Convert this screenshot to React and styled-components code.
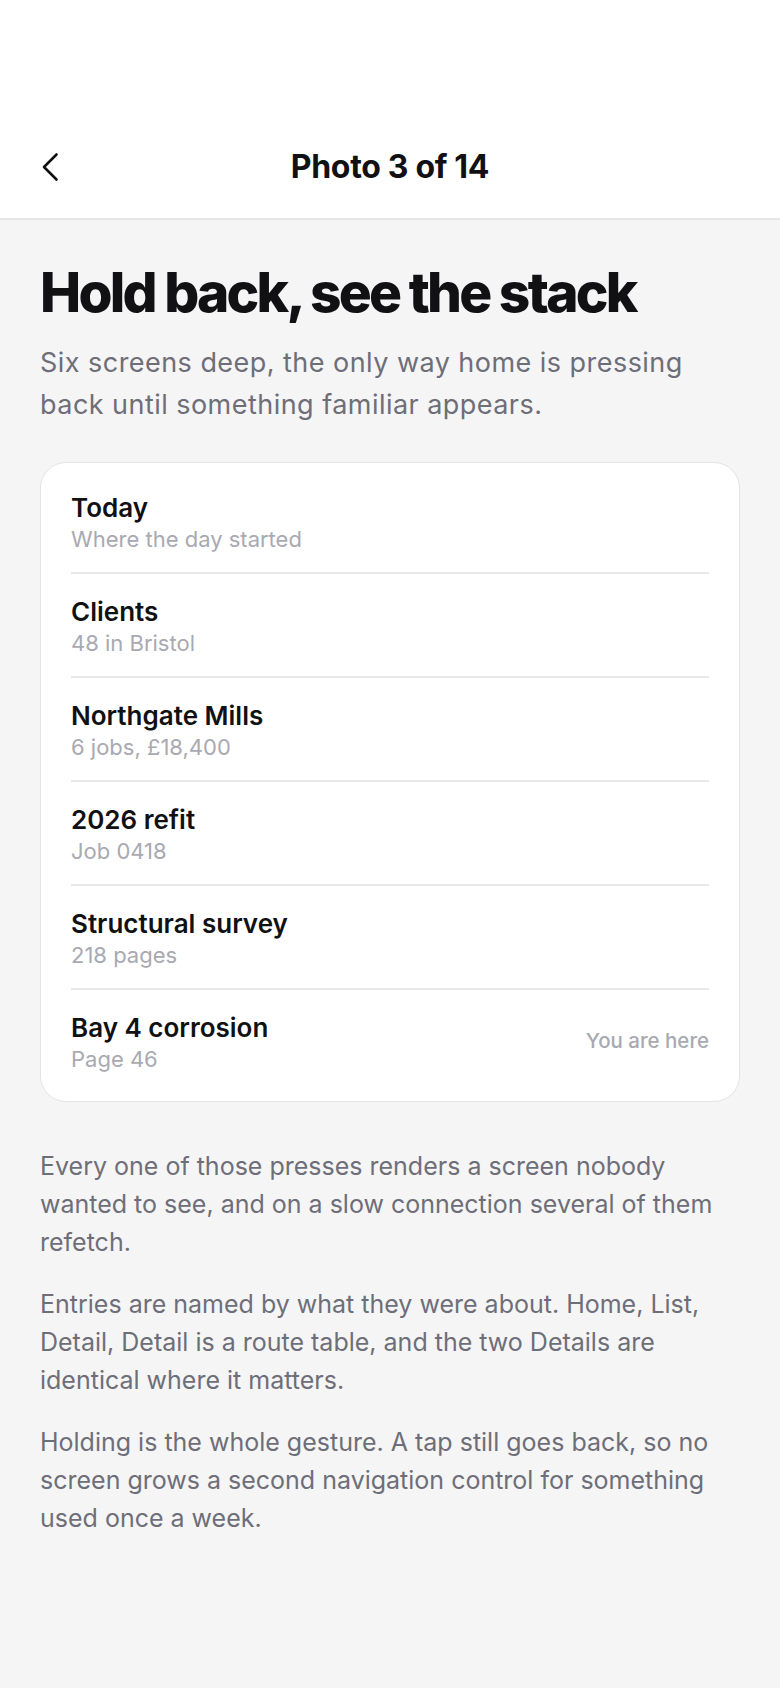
import React from "react";
import styled, { createGlobalStyle } from "styled-components";

const Global = createGlobalStyle`
  html, body { margin: 0; padding: 0; background: #f5f5f6; }
  body { font-family: Inter, "Noto Sans", sans-serif; -webkit-font-smoothing: antialiased; }
  * { box-sizing: border-box; }
`;

const Screen = styled.div`
  min-height: 1688px;
  background: #f5f5f6;
  display: flex;
  flex-direction: column;
`;

const Header = styled.header`
  background: #ffffff;
  border-bottom: 2px solid #e6e6e9;
  height: 220px;
  padding-top: 116px;
  display: grid;
  grid-template-columns: 100px 1fr 100px;
  align-items: start;
`;

const BackButton = styled.button`
  background: none;
  border: none;
  padding: 0 0 0 41px;
  height: 102px;
  display: flex;
  align-items: center;
  color: #111114;
  cursor: pointer;
`;

const Title = styled.h1`
  margin: 0;
  text-align: center;
  font-size: 32px;
  font-weight: 700;
  letter-spacing: -0.01em;
  color: #111114;
  line-height: 102px;
`;

const Content = styled.main`
  padding: 40px 40px 60px;
  display: flex;
  flex-direction: column;
`;

const Heading = styled.h2`
  margin: 0;
  font-size: 55px;
  line-height: 64px;
  font-weight: 800;
  letter-spacing: -0.05em;
  color: #111114;
`;

const Lede = styled.p`
  margin: 18px 0 0;
  font-size: 27px;
  line-height: 42px;
  letter-spacing: 0.017em;
  color: #6e6e78;
  font-weight: 400;
`;

const Card = styled.section`
  margin-top: 36px;
  background: #ffffff;
  border: 1px solid #e4e4e8;
  border-radius: 26px;
  padding: 7px 30px 9px;
  display: flex;
  flex-direction: column;
`;

const Row = styled.div`
  display: flex;
  align-items: center;
  justify-content: space-between;
  padding: 22px 0 18px;
  border-bottom: ${(p) => (p.$last ? "none" : "2px solid #e8e8eb")};
`;

const RowText = styled.div`
  display: flex;
  flex-direction: column;
`;

const RowTitle = styled.div`
  font-size: 26px;
  line-height: 32px;
  font-weight: 600;
  color: #111114;
`;

const RowSub = styled.div`
  font-size: 22px;
  line-height: 30px;
  color: #a9a9b1;
`;

const Here = styled.div`
  font-size: 20.5px;
  color: #a9a9b1;
  font-weight: 500;
  padding-bottom: 6px;
`;

const Body = styled.div`
  margin-top: 45px;
  display: flex;
  flex-direction: column;
  gap: 24px;
`;

const Para = styled.p`
  margin: 0;
  font-size: 25px;
  line-height: 38px;
  color: #6e6e78;
`;

const rows = [
  { t: "Today", s: "Where the day started" },
  { t: "Clients", s: "48 in Bristol" },
  { t: "Northgate Mills", s: "6 jobs, £18,400" },
  { t: "2026 refit", s: "Job 0418" },
  { t: "Structural survey", s: "218 pages" },
  { t: "Bay 4 corrosion", s: "Page 46", here: true },
];

export default function App() {
  return (
    <Screen>
      <Global />
      <Header>
        <BackButton aria-label="Back">
          <svg width="18" height="30" viewBox="0 0 18 30" fill="none" stroke="currentColor" strokeWidth="2.6" strokeLinecap="round" strokeLinejoin="round">
            <path d="M15.5 2.5 3 15l12.5 12.5" />
          </svg>
        </BackButton>
        <Title>Photo 3 of 14</Title>
        <div />
      </Header>
      <Content>
        <Heading>Hold back, see the stack</Heading>
        <Lede>Six screens deep, the only way home is pressing back until something familiar appears.</Lede>
        <Card>
          {rows.map((r, i) => (
            <Row key={r.t} $last={i === rows.length - 1}>
              <RowText>
                <RowTitle>{r.t}</RowTitle>
                <RowSub>{r.s}</RowSub>
              </RowText>
              {r.here && <Here>You are here</Here>}
            </Row>
          ))}
        </Card>
        <Body>
          <Para>Every one of those presses renders a screen nobody wanted to see, and on a slow connection several of them refetch.</Para>
          <Para>Entries are named by what they were about. Home, List, Detail, Detail is a route table, and the two Details are identical where it matters.</Para>
          <Para>Holding is the whole gesture. A tap still goes back, so no screen grows a second navigation control for something used once a week.</Para>
        </Body>
      </Content>
    </Screen>
  );
}
